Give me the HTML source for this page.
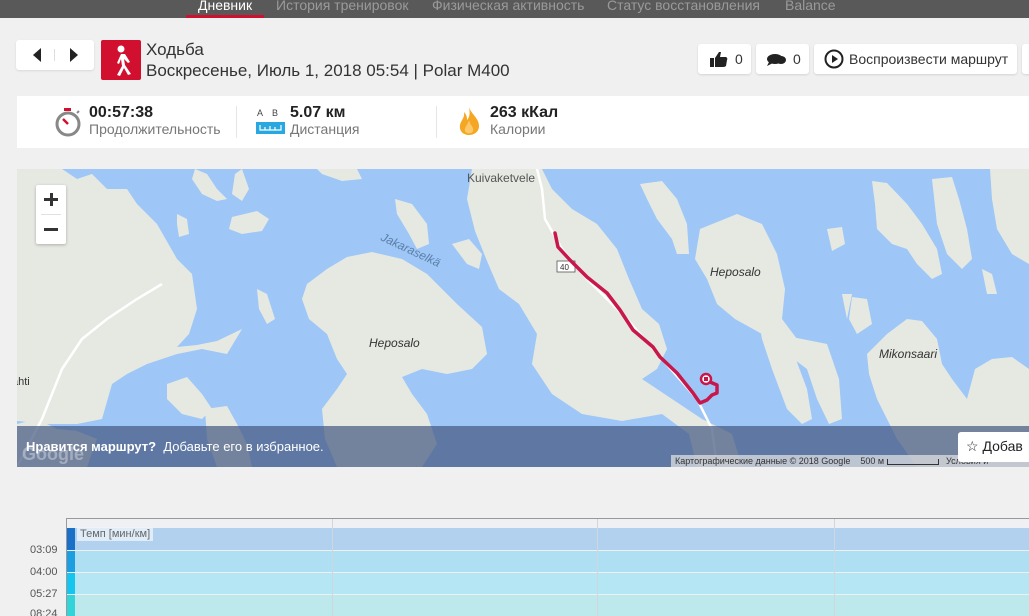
<!DOCTYPE html>
<html><head><meta charset="utf-8"><style>
*{margin:0;padding:0;box-sizing:border-box}
html,body{width:1029px;height:616px;overflow:hidden}
body{background:#f0f0f0;font-family:"Liberation Sans",Arial,sans-serif;position:relative;color:#333}
.abs{position:absolute}
.top{left:0;top:0;width:1029px;height:18px;background:#595959}
.tab{top:-3px;font-size:14px;color:#9a9a9a;white-space:nowrap}
.btn{background:#fff;border-radius:3px;box-shadow:0 1px 2px rgba(0,0,0,.12);height:30px;top:44px;font-size:14px;color:#333;display:flex;align-items:center}
</style></head><body>
<div class="abs top"></div>
<div class="abs tab" style="left:198px;color:#fff">Дневник</div>
<div class="abs" style="left:186px;top:15px;width:78px;height:3px;background:#d10f2f"></div>
<div class="abs tab" style="left:276px">История тренировок</div>
<div class="abs tab" style="left:432px">Физическая активность</div>
<div class="abs tab" style="left:607px">Статус восстановления</div>
<div class="abs tab" style="left:785px">Balance</div>

<div class="abs" style="left:16px;top:40px;width:78px;height:30px;background:#fff;border-radius:3px;box-shadow:0 1px 2px rgba(0,0,0,.1)">
 <svg width="78" height="30"><polygon points="25,8 25,22 17,15" fill="#222"/><rect x="38" y="9" width="1" height="12" fill="#ddd"/><polygon points="54,8 54,22 62,15" fill="#222"/></svg>
</div>
<div class="abs" style="left:101px;top:40px;width:40px;height:40px;background:#d10f2f;border-radius:2px">
 <svg width="40" height="40"><circle cx="20" cy="9" r="3.5" fill="#fff"/><path d="M20 14 L16 23 L18 24 L20 19 L21 26 L16 35 L19 36 L23 28 L27 35 L30 34 L24 25 L23 19 L27 23 L29 22 L24 14 Z" fill="#fff"/></svg>
</div>
<div class="abs" style="left:146px;top:40px;font-size:17px;color:#333">Ходьба</div>
<div class="abs" style="left:146px;top:61px;font-size:17px;color:#333">Воскресенье, Июль 1, 2018 05:54 | Polar M400</div>

<div class="abs btn" style="left:698px;width:53px;padding-left:11px"><svg width="20" height="18"><path d="M1 8h4v9H1z M6 8 L10 2 L12 2 L11 7 L17 7 Q19 8 18 10 L17 16 Q16 17 14 17 L6 17Z" fill="#222"/></svg><span style="margin-left:6px">0</span></div>
<div class="abs btn" style="left:756px;width:53px;padding-left:10px"><svg width="22" height="16"><ellipse cx="9" cy="8" rx="8" ry="5" fill="#222"/><ellipse cx="15" cy="9" rx="5" ry="4" fill="#222"/><path d="M3 11 L1 15 L7 12Z" fill="#222"/></svg><span style="margin-left:5px">0</span></div>
<div class="abs btn" style="left:814px;width:203px;padding-left:10px"><svg width="20" height="20"><circle cx="10" cy="10" r="8.5" fill="none" stroke="#222" stroke-width="2"/><polygon points="8,6 8,14 14,10" fill="#222"/></svg><span style="margin-left:5px">Воспроизвести маршрут</span></div>
<div class="abs btn" style="left:1022px;width:20px"></div>

<div class="abs" style="left:17px;top:96px;width:1012px;height:52px;background:#fff"></div>
<svg class="abs" style="left:54px;top:106px" width="30" height="32"><rect x="10" y="2" width="7" height="3" fill="#d10f2f"/><circle cx="14" cy="18" r="11" fill="none" stroke="#888" stroke-width="3"/><circle cx="14" cy="18" r="8" fill="#fff"/><line x1="14" y1="18" x2="9" y2="13" stroke="#d10f2f" stroke-width="2.5"/><line x1="23" y1="7" x2="25" y2="5" stroke="#888" stroke-width="2"/></svg>
<div class="abs" style="left:89px;top:104px;font-size:16px;font-weight:bold;color:#222">00:57:38</div>
<div class="abs" style="left:89px;top:121px;font-size:14px;color:#777">Продолжительность</div>
<div class="abs" style="left:236px;top:106px;width:1px;height:32px;background:#e6e6e6"></div>
<div class="abs" style="left:257px;top:108px;font-size:9px;color:#444;letter-spacing:9px">AB</div>
<svg class="abs" style="left:256px;top:122px" width="29" height="12"><rect width="29" height="12" fill="#29a7e1"/><path d="M4 3 V8 H25 V3 M9 5V8 M14 4V8 M19 5V8" fill="none" stroke="#fff" stroke-width="1.2"/></svg>
<div class="abs" style="left:290px;top:104px;font-size:16px;font-weight:bold;color:#222">5.07 км</div>
<div class="abs" style="left:290px;top:121px;font-size:14px;color:#777">Дистанция</div>
<div class="abs" style="left:436px;top:106px;width:1px;height:32px;background:#e6e6e6"></div>
<svg class="abs" style="left:457px;top:106px" width="26" height="30"><path d="M12 1 C14 8 22 12 22 20 C22 26 17 29 12 29 C6 29 2 25 3 19 C4 14 8 12 7 6 C10 9 10 12 10 14 C13 11 13 6 12 1Z" fill="#f5a623"/><path d="M12 14 C13 19 17 21 16 25 C15 28 9 28 8 25 C7 21 11 19 12 14Z" fill="#fbc96a"/></svg>
<div class="abs" style="left:490px;top:104px;font-size:16px;font-weight:bold;color:#222">263 кКал</div>
<div class="abs" style="left:490px;top:121px;font-size:14px;color:#777">Калории</div>

<svg class="abs" style="left:17px;top:169px" width="1012" height="298" viewBox="0 0 1012 298">
<rect width="1012" height="298" fill="#9ec7f7"/>
<g fill="#e6e9e2">
<path d="M0 0 L45 0 L60 10 L75 5 L90 20 L110 20 L120 35 L140 55 L160 90 L175 105 L180 140 L172 165 L160 178 L180 176 L200 172 L225 160 L210 185 L185 180 L160 185 L130 195 L110 205 L95 215 L85 250 L60 255 L30 255 L0 252Z"/>
<path d="M0 255 L20 250 L40 260 L60 262 L80 270 L70 298 L0 298Z"/>
<path d="M150 215 L170 208 L185 225 L195 240 L185 250 L165 245 L150 230Z"/>
<path d="M188 240 L210 237 L220 255 L230 275 L235 298 L200 298 L190 270Z"/>
<path d="M215 48 L240 42 L252 50 L245 62 L225 65 L212 60Z"/>
<path d="M160 45 L170 50 L172 65 L162 68 L160 55Z"/>
<path d="M178 0 L190 5 L200 20 L210 30 L200 32 L185 25 L175 10Z"/>
<path d="M225 0 L232 20 L225 32 L215 25 L218 5Z"/>
<path d="M300 0 L340 0 L345 10 L325 12 L305 5Z"/>
<path d="M378 30 L395 35 L410 55 L412 75 L400 80 L392 65 L380 45Z"/>
<path d="M240 120 L250 125 L258 150 L250 155 L242 140Z"/>
<path d="M435 75 L452 70 L465 85 L462 100 L450 95Z"/>
<path d="M290 115 L310 100 L330 88 L355 83 L385 90 L410 105 L440 135 L465 158 L470 185 L455 200 L430 205 L405 200 L385 208 L395 225 L410 245 L420 275 L405 298 L320 298 L308 270 L305 240 L320 220 L330 205 L320 190 L310 165 L292 150 L285 130Z"/>
<path d="M455 0 L525 0 L535 20 L555 40 L580 55 L600 80 L612 110 L625 140 L642 155 L650 180 L640 200 L625 210 L655 230 L685 250 L715 265 L725 298 L680 298 L672 265 L645 245 L605 252 L565 245 L535 225 L515 195 L520 165 L502 135 L482 120 L470 92 L458 62 L450 30Z"/>
<path d="M623 15 L645 12 L660 30 L670 55 L672 85 L660 85 L655 70 L640 50 L630 30Z"/>
<path d="M683 60 L720 45 L745 55 L760 85 L768 120 L765 150 L780 170 L770 178 L745 165 L718 150 L700 135 L690 110 L678 90Z"/>
<path d="M735 80 L745 85 L760 140 L775 180 L790 220 L795 250 L785 255 L770 240 L755 200 L745 170 L738 130Z"/>
<path d="M760 160 L775 168 L810 175 L822 210 L825 250 L812 255 L800 230 L790 200 L770 185Z"/>
<path d="M855 12 L870 14 L890 35 L905 55 L920 80 L925 105 L915 110 L900 95 L890 80 L875 75 L860 60 L858 35Z"/>
<path d="M915 10 L935 8 L942 30 L950 60 L955 90 L945 100 L930 85 L920 55Z"/>
<path d="M810 60 L825 58 L828 75 L815 82Z"/>
<path d="M835 128 L850 130 L855 155 L840 165 L832 150Z"/>
<path d="M825 125 L835 125 L830 150Z"/>
<path d="M973 0 L1012 0 L1012 95 L995 85 L980 60 L975 30Z"/>
<path d="M850 185 L870 165 L890 150 L905 152 L920 170 L925 195 L935 210 L950 230 L958 200 L975 190 L995 188 L1012 200 L1012 298 L900 298 L880 270 L860 230 L852 205Z"/>
<path d="M965 100 L975 105 L980 125 L970 125Z"/>
</g>
<g fill="none" stroke="#fff" stroke-width="2.5">
<path d="M0 298 L25 250 L45 200 L65 170 L90 150 L120 130 L145 115"/>
<path d="M520 0 L525 20 L528 50 L545 80 L570 110 L610 150 L645 190 L680 230 L695 260 L700 298"/>
</g>
<text x="450" y="13" font-size="12" fill="#555" font-family="Liberation Sans">Kuivaketvele</text>
<text x="363" y="71" font-size="12" fill="#5b7fa8" font-family="Liberation Sans" font-style="italic" transform="rotate(25 363 71)">Jakaraselkä</text>
<text x="352" y="178" font-size="12" fill="#333" font-family="Liberation Sans" font-style="italic">Heposalo</text>
<text x="693" y="107" font-size="12" fill="#333" font-family="Liberation Sans" font-style="italic">Heposalo</text>
<text x="862" y="189" font-size="12" fill="#333" font-family="Liberation Sans" font-style="italic">Mikonsaari</text>
<text x="-5" y="216" font-size="11" fill="#333" font-family="Liberation Sans">ahti</text>
<rect x="540" y="92" width="18" height="11" fill="#fff" stroke="#555" stroke-width="0.8"/>
<text x="543" y="101" font-size="8" fill="#333" font-family="Liberation Sans">40</text>
</svg>
<svg class="abs" style="left:0;top:0" width="1029" height="470">
<path d="M555 233 L558 247 L570 260 L587 277 L607 293 L620 310 L633 330 L653 347 L660 357 L677 373 L693 393 L700 403 L707 400 L712 395 L717 393 L717 385 L710 382" fill="none" stroke="#c8174a" stroke-width="3.5" stroke-linejoin="round" stroke-linecap="round"/>
<circle cx="706" cy="379" r="5" fill="#fff" stroke="#c8174a" stroke-width="2.5"/>
<rect x="704" y="377" width="4" height="4" fill="#c8174a"/>
</svg>
<div class="abs" style="left:36px;top:185px;width:30px;height:59px;background:#fff;border-radius:2px;box-shadow:0 1px 3px rgba(0,0,0,.25)">
 <div style="position:absolute;left:8px;top:13px;width:14px;height:3px;background:#333"></div><div style="position:absolute;left:13.5px;top:8px;width:3px;height:13px;background:#333"></div>
 <div style="position:absolute;left:5px;top:29px;width:20px;height:1px;background:#e0e0e0"></div>
 <div style="position:absolute;left:8px;top:43px;width:14px;height:3px;background:#333"></div>
</div>
<div class="abs" style="left:17px;top:426px;width:1012px;height:41px;background:rgba(70,90,130,.72)"></div>
<div class="abs" style="left:26px;top:439px;font-size:13px;color:#fff"><b>Нравится маршрут?</b>&nbsp; Добавьте его в избранное.</div>
<div class="abs" style="left:22px;top:444px;font-size:18px;color:rgba(255,255,255,.35);font-weight:bold">Google</div>
<div class="abs" style="left:671px;top:455px;width:358px;height:12px;background:rgba(230,230,230,.7);font-size:9px;color:#333;white-space:nowrap;padding-left:4px;line-height:12px">Картографические данные © 2018 Google &nbsp;&nbsp; 500 м <span style="display:inline-block;width:52px;height:6px;border:1px solid #333;border-top:none;vertical-align:middle"></span>&nbsp;&nbsp; Условия и</div>
<div class="abs" style="left:958px;top:432px;width:80px;height:30px;background:#fff;border-radius:3px;font-size:14px;color:#222;padding:6px 0 0 8px;white-space:nowrap">☆ Добав</div>

<div class="abs" style="left:66px;top:518px;width:963px;height:98px;background:#eef0f4;border-left:1px solid #999;border-top:1px solid #999"></div>
<div class="abs" style="left:67px;top:528px;width:962px;height:22px;background:#b1d1ee"></div>
<div class="abs" style="left:67px;top:551px;width:962px;height:21px;background:#afdff2"></div>
<div class="abs" style="left:67px;top:573px;width:962px;height:21px;background:#b4e7f3"></div>
<div class="abs" style="left:67px;top:595px;width:962px;height:21px;background:#bde9ec"></div>
<div class="abs" style="left:67px;top:528px;width:8px;height:22px;background:#1a6fc9"></div>
<div class="abs" style="left:67px;top:551px;width:8px;height:21px;background:#1b9fe0"></div>
<div class="abs" style="left:67px;top:573px;width:8px;height:21px;background:#14c6ef"></div>
<div class="abs" style="left:67px;top:595px;width:8px;height:21px;background:#30d4d9"></div>
<div class="abs" style="left:332px;top:519px;width:1px;height:97px;background:#d0d6de"></div>
<div class="abs" style="left:597px;top:519px;width:1px;height:97px;background:#d0d6de"></div>
<div class="abs" style="left:834px;top:519px;width:1px;height:97px;background:#d0d6de"></div>
<div class="abs" style="left:77px;top:527px;padding:1px 3px;background:rgba(240,244,250,.75);font-size:11px;color:#666">Темп [мин/км]</div>
<div class="abs" style="left:30px;top:544px;font-size:11px;color:#555">03:09</div>
<div class="abs" style="left:30px;top:566px;font-size:11px;color:#555">04:00</div>
<div class="abs" style="left:30px;top:588px;font-size:11px;color:#555">05:27</div>
<div class="abs" style="left:30px;top:608px;font-size:11px;color:#555">08:24</div>
</body></html>
